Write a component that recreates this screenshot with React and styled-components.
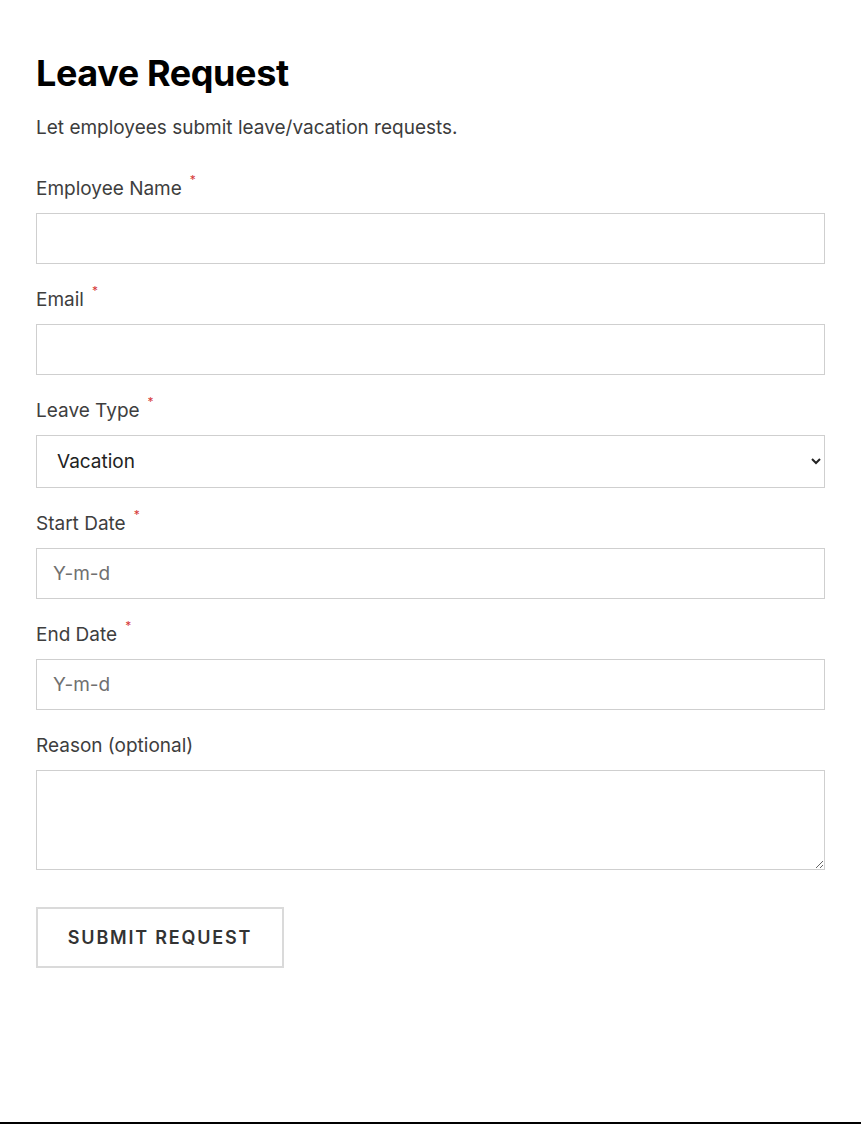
import React from 'react';
import styled, { createGlobalStyle } from 'styled-components';

const GlobalStyle = createGlobalStyle`
    * { box-sizing : border-box; }
    html, body { margin : 0; padding : 0; background : #fff; }
    body { font-family : Inter, "Noto Sans", "Liberation Sans", sans-serif; }
`;

const fields = [
    { name: 'name', label: 'Employee Name', required: true, kind: 'text' },
    { name: 'email', label: 'Email', required: true, kind: 'email' },
    { name: 'type', label: 'Leave Type', required: true, kind: 'select' },
    { name: 'start', label: 'Start Date', required: true, kind: 'date' },
    { name: 'end', label: 'End Date', required: true, kind: 'date' },
    { name: 'reason', label: 'Reason (optional)', required: false, kind: 'textarea' },
];

const App = () => {
    const renderControl = (field) => {
        if (field.kind === 'select') {
            return (
                <Select id={field.name} defaultValue="Vacation">
                    <option>Vacation</option>
                    <option>Sick Leave</option>
                    <option>Personal</option>
                    <option>Unpaid</option>
                </Select>
            );
        }
        if (field.kind === 'textarea') {
            return <TextArea id={field.name} />;
        }
        if (field.kind === 'date') {
            return <Input id={field.name} type="text" placeholder="Y-m-d" />;
        }
        return <Input id={field.name} type={field.kind} />;
    };

    return (
        <Page>
            <GlobalStyle />
            <Form onSubmit={(e) => e.preventDefault()}>
                <Title>Leave Request</Title>
                <Intro>Let employees submit leave/vacation requests.</Intro>

                {fields.map((field) => (
                    <Field key={field.name}>
                        <Label htmlFor={field.name}>
                            {field.label}
                            {field.required && <Star>*</Star>}
                        </Label>
                        {renderControl(field)}
                    </Field>
                ))}

                <SubmitButton type="submit">Submit Request</SubmitButton>
            </Form>
            <BottomRule />
        </Page>
    );
};

export default App;

const Page = styled.div`
    min-height : 100vh;
    display : flex;
    flex-direction : column;
`

const Form = styled.form`
    flex : 1;
    width : 825px;
    padding : 52px 0 0 36px;
    display : flex;
    flex-direction : column;
`

const Title = styled.h1`
    margin : 0;
    font-size : 36px;
    line-height : 42px;
    font-weight : 700;
    color : #000;
    letter-spacing : -0.4px;
`

const Intro = styled.p`
    margin : 20px 0 0;
    font-size : 19px;
    line-height : 28px;
    color : #3c3c3c;
`

const Field = styled.div`
    display : flex;
    flex-direction : column;
    margin-top : 22px;

    &:first-of-type {
        margin-top : 33px;
    }
`

const Label = styled.label`
    font-size : 19px;
    line-height : 28px;
    color : #3e3e3e;
    margin-bottom : 10px;
`

const Star = styled.span`
    color : #d63838;
    font-size : 12px;
    line-height : 0;
    vertical-align : 11px;
    margin-left : 8px;
`

const controlBase = `
    width : 100%;
    border : 1px solid #cfcfcf;
    border-radius : 0;
    background : #fff;
    font-family : Inter, "Noto Sans", "Liberation Sans", sans-serif;
    font-size : 19px;
    color : #222;
    outline : none;
`

const Input = styled.input`
    ${controlBase}
    height : 51px;
    padding : 0 16px;

    &::placeholder {
        color : #707070;
    }
`

const Select = styled.select`
    ${controlBase}
    height : 53px;
    padding : 0 8px 0 16px;
`

const TextArea = styled.textarea`
    ${controlBase}
    height : 100px;
    padding : 12px 16px;
    resize : vertical;
`

const SubmitButton = styled.button`
    margin-top : 37px;
    width : 248px;
    height : 61px;
    background : #fff;
    border : 2px solid #dadada;
    border-radius : 0;
    font-family : Inter, "Noto Sans", "Liberation Sans", sans-serif;
    font-size : 18px;
    font-weight : 600;
    letter-spacing : 1.8px;
    text-transform : uppercase;
    color : #333;
    cursor : pointer;
`

const BottomRule = styled.div`
    height : 2px;
    background : #000;
    margin-bottom : 1px;
`
